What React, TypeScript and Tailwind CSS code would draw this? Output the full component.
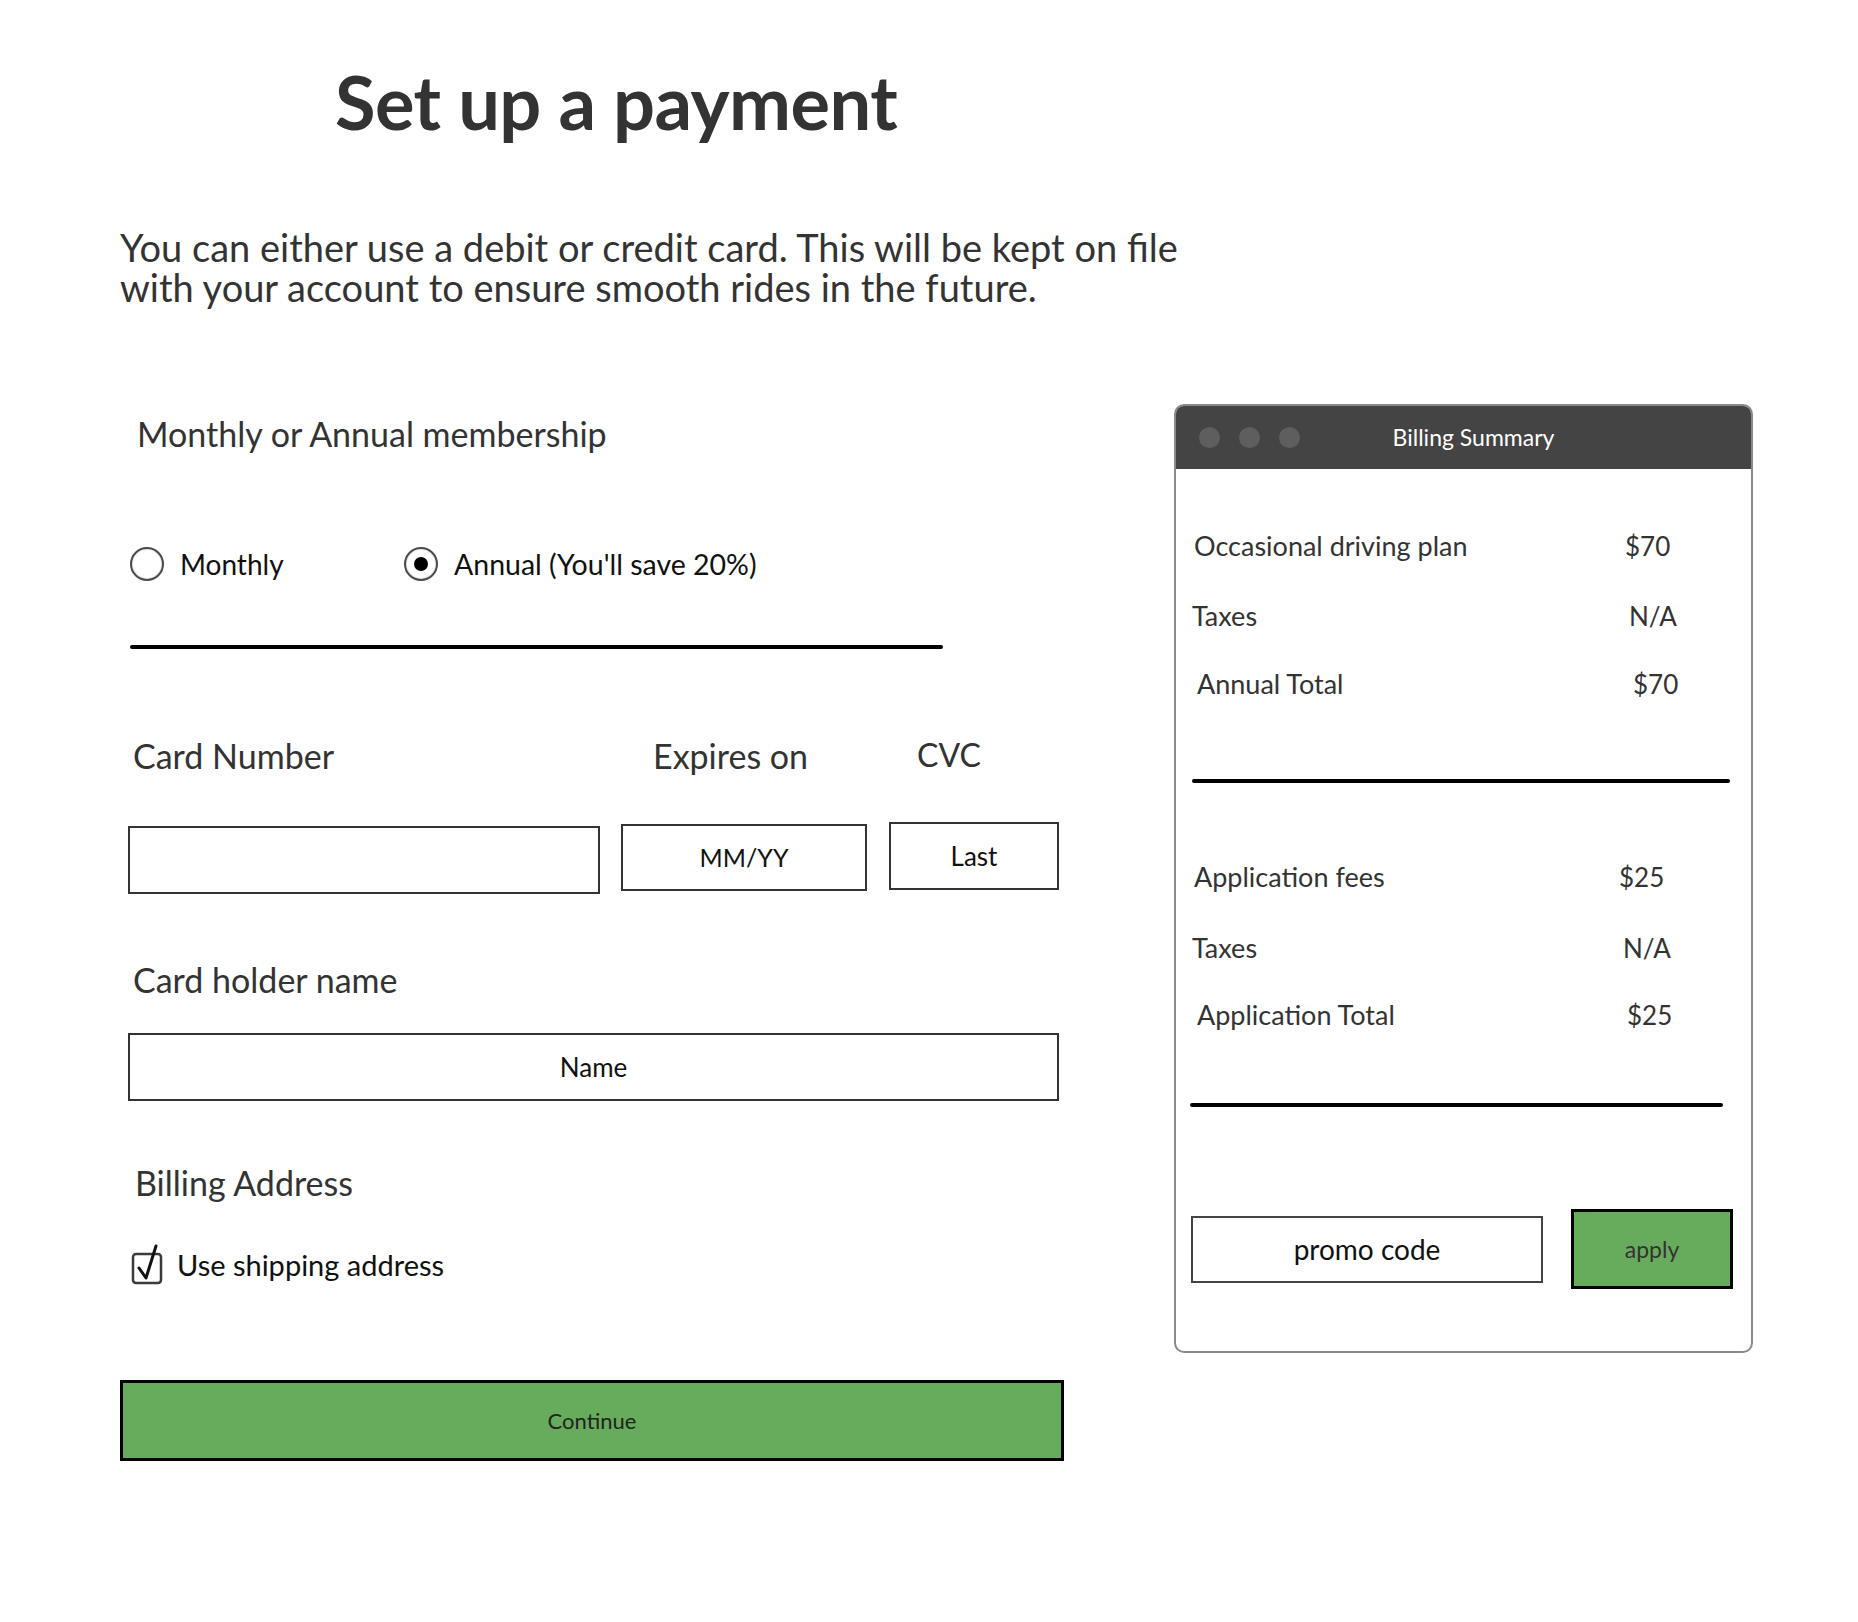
import React from 'react';

const font = "font-['Lato','Open_Sans',sans-serif]";

const Radio: React.FC<{ checked?: boolean }> = ({ checked }) => (
  <span className="w-[34px] h-[34px] rounded-full border-[2.5px] border-[#4a4a4a] bg-white flex items-center justify-center shadow-[inset_0_0_2px_rgba(0,0,0,0.3)]">
    {checked && <span className="w-[14px] h-[14px] rounded-full bg-black" />}
  </span>
);

const CheckBox: React.FC = () => (
  <svg width="34" height="40" viewBox="0 0 34 40" className="overflow-visible">
    <rect x="2" y="9" width="28" height="29" rx="3" fill="white" stroke="#3a3a3a" strokeWidth="2.5" />
    <path d="M8 23 L15 33 L25 1" fill="none" stroke="#111" strokeWidth="3" strokeLinecap="round" strokeLinejoin="round" />
  </svg>
);

const SummaryRow: React.FC<{ label: string; value: string; pl: string; w: string; mt: string }> = ({ label, value, pl, w, mt }) => (
  <div className={`flex h-[40px] items-center text-[27px] text-[#333] ${mt}`}>
    <span className={`${w} ${pl} shrink-0`}>{label}</span>
    <span className="text-[26px]">{value}</span>
  </div>
);

export default function App() {
  return (
    <div className={`min-h-screen bg-white ${font}`}>
      <div className="flex items-start">
        {/* left form */}
        <div className="ml-[120px] w-[944px] flex flex-col">
          <h1 className="mt-[62px] pl-[215px] text-[74px] leading-[80px] font-bold text-[#333] tracking-[-0.5px] whitespace-nowrap">
            Set up a payment
          </h1>
          <div className="mt-[85px] flex flex-col text-[38px] leading-[40px] text-[#333] whitespace-nowrap">
            <span>You can either use a debit or credit card. This will be kept on file</span>
            <span>with your account to ensure smooth rides in the future.</span>
          </div>

          <div className="mt-[107px] pl-[17px] text-[34px] leading-[40px] text-[#333]">Monthly or Annual membership</div>

          <div className="mt-[90px] h-[40px] flex items-center text-[28px] text-[#111]">
            <div className="pl-[10px] w-[284px] flex items-center gap-[16px]">
              <Radio />
              <span>Monthly</span>
            </div>
            <div className="flex items-center gap-[16px]">
              <Radio checked />
              <span className="text-[28.5px]">Annual (You'll save 20%)</span>
            </div>
          </div>

          <div className="mt-[61px] ml-[10px] w-[813px] h-[4px] bg-black rounded-full" />

          <div className="mt-[86px] h-[40px] flex items-center text-[34px] text-[#333]">
            <span className="pl-[13px] w-[533px]">Card Number</span>
            <span className="w-[264px]">Expires on</span>
            <span className="text-[32px]">CVC</span>
          </div>

          <div className="mt-[49px] flex items-start text-[25px] text-[#111]">
            <div className="ml-[8px] mt-[2px] w-[472px] h-[68px] border-2 border-[#333]" />
            <div className="ml-[21px] w-[246px] h-[67px] border-2 border-[#333] flex items-center justify-center">MM/YY</div>
            <div className="ml-[22px] mt-[-2px] w-[170px] h-[68px] border-2 border-[#333] flex items-center justify-center text-[26px]">Last</div>
          </div>

          <div className="mt-[66px] pl-[13px] text-[34px] leading-[40px] text-[#333]">Card holder name</div>

          <div className="mt-[33px] ml-[8px] w-[931px] h-[68px] border-2 border-[#333] flex items-center justify-center text-[26px] text-[#111]">
            Name
          </div>

          <div className="mt-[62px] pl-[15px] text-[34px] leading-[40px] text-[#333]">Billing Address</div>

          <div className="mt-[42px] h-[40px] pl-[11px] flex items-center gap-[12px] text-[29px] text-[#111]">
            <CheckBox />
            <span>Use shipping address</span>
          </div>

          <button className="mt-[95px] w-[944px] h-[81px] bg-[#67ac5c] border-[3px] border-black text-[22px] text-[#222]">
            Continue
          </button>
        </div>

        {/* billing summary window */}
        <div className="ml-[110px] mt-[404px] w-[579px] h-[949px] rounded-[10px] border-2 border-[#8a8a8a] bg-white overflow-hidden flex flex-col">
          <div className="h-[63px] bg-[#444] flex items-center relative shrink-0">
            <div className="flex gap-[19px] pl-[23px]">
              <span className="w-[21px] h-[21px] rounded-full bg-[#5e5e5e]" />
              <span className="w-[21px] h-[21px] rounded-full bg-[#5e5e5e]" />
              <span className="w-[21px] h-[21px] rounded-full bg-[#5e5e5e]" />
            </div>
            <span className="absolute left-0 right-0 text-center text-[23px] text-white ml-[20px]">Billing Summary</span>
          </div>

          <div className="flex flex-col">
            <SummaryRow label="Occasional driving plan" value="$70" pl="pl-[18px]" w="w-[449px]" mt="mt-[57px]" />
            <SummaryRow label="Taxes" value="N/A" pl="pl-[16px]" w="w-[453px]" mt="mt-[30px]" />
            <SummaryRow label="Annual Total" value="$70" pl="pl-[21px]" w="w-[457px]" mt="mt-[28px]" />

            <div className="mt-[75px] ml-[16px] w-[538px] h-[4px] bg-black rounded-full" />

            <SummaryRow label="Application fees" value="$25" pl="pl-[18px]" w="w-[443px]" mt="mt-[74px]" />
            <SummaryRow label="Taxes" value="N/A" pl="pl-[16px]" w="w-[447px]" mt="mt-[31px]" />
            <SummaryRow label="Application Total" value="$25" pl="pl-[21px]" w="w-[451px]" mt="mt-[27px]" />

            <div className="mt-[68px] ml-[14px] w-[533px] h-[4px] bg-black rounded-full" />

            <div className="mt-[102px] h-[80px] flex items-center">
              <div className="ml-[15px] w-[352px] h-[67px] border-2 border-[#444] flex items-center justify-center text-[28px] text-[#111]">
                promo code
              </div>
              <button className="ml-[28px] w-[162px] h-[80px] bg-[#67ac5c] border-[3px] border-black text-[23px] text-[#333]">
                apply
              </button>
            </div>
          </div>
        </div>
      </div>
    </div>
  );
}
